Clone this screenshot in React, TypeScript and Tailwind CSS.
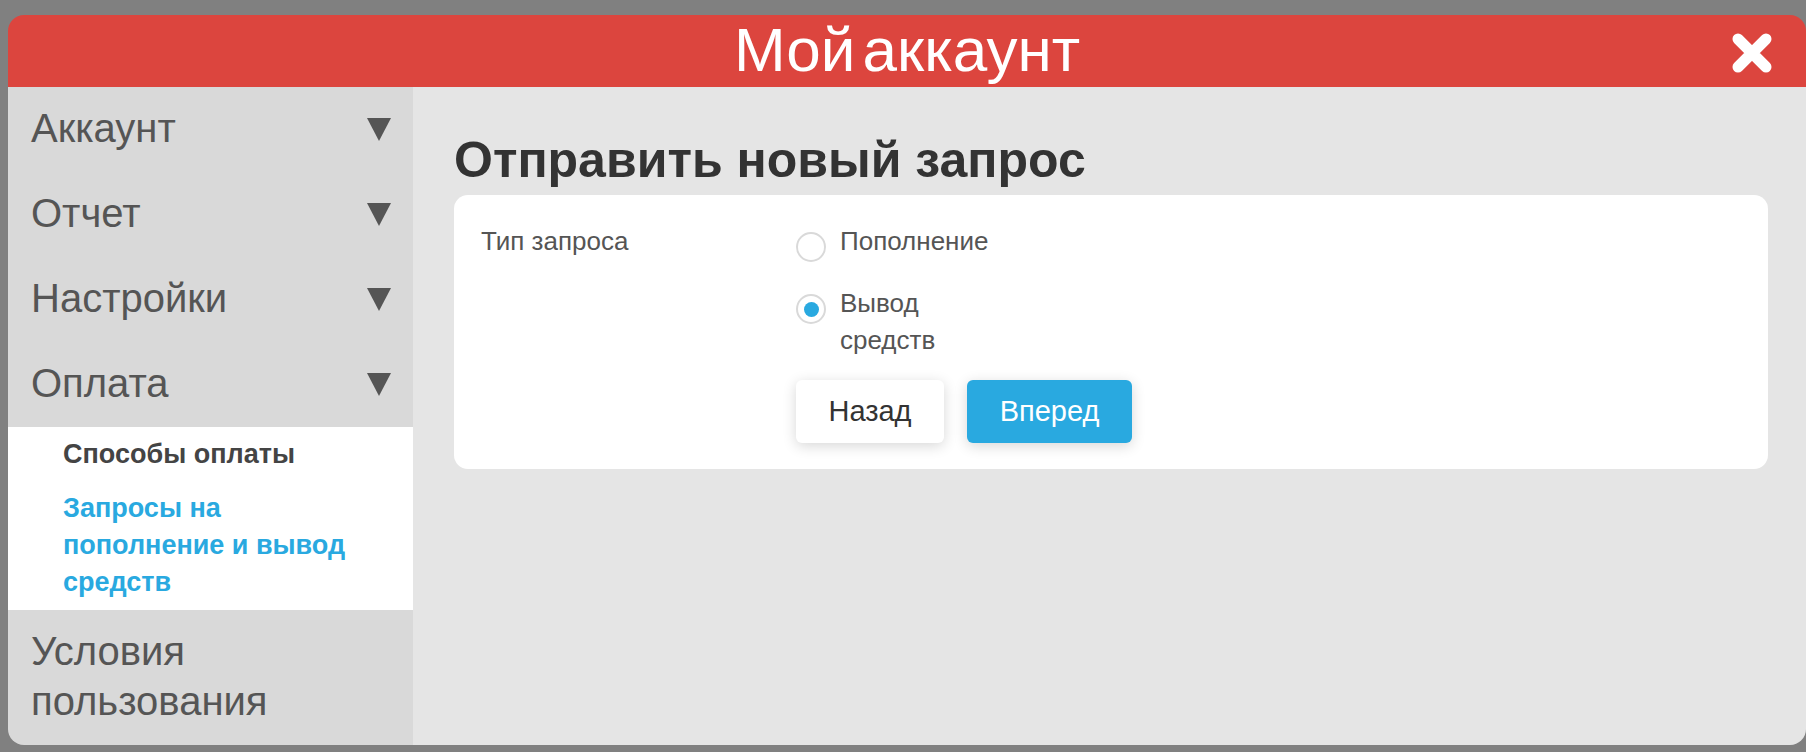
import React from 'react';

function Caret() {
  return (
    <svg width="24" height="23" viewBox="0 0 24 23" className="shrink-0">
      <polygon points="0,0 24,0 12,23" fill="#555555" />
    </svg>
  );
}

function Radio({ checked }: { checked?: boolean }) {
  return (
    <span className="mt-[9px] flex h-[30px] w-[30px] shrink-0 items-center justify-center rounded-full border-2 border-[#d9d9d9] bg-white">
      {checked && <span className="h-[15px] w-[15px] rounded-full bg-[#29a9e0]" />}
    </span>
  );
}

export default function App() {
  const menu = ['Аккаунт', 'Отчет', 'Настройки', 'Оплата'];

  return (
    <div className="h-[752px] w-full overflow-hidden bg-[#808080] pl-[8px] pt-[15px] font-['Liberation_Sans',Arial,sans-serif]">
      <div className="flex h-[730px] w-[1798px] flex-col overflow-hidden rounded-[16px]">
        {/* Header */}
        <div className="relative flex h-[72px] shrink-0 items-center justify-center bg-[#dc453e] pb-[3px]">
          <h1 className="text-[62px] leading-none text-white [word-spacing:-10px]">Мой аккаунт</h1>
          <button className="absolute right-[34px] top-[18px]">
            <svg width="40" height="40" viewBox="0 0 40 40">
              <path d="M6 6L34 34M34 6L6 34" stroke="white" strokeWidth="11" strokeLinecap="round" />
            </svg>
          </button>
        </div>

        <div className="flex flex-1">
          {/* Sidebar */}
          <div className="flex w-[405px] shrink-0 flex-col bg-[#d9d9d9]">
            {menu.map((item) => (
              <div
                key={item}
                className="flex h-[85px] items-center justify-between pl-[23px] pr-[22px] text-[40px] leading-[50px] text-[#555]"
              >
                <span className="-mt-[4px]">{item}</span>
                <Caret />
              </div>
            ))}
            <div className="flex flex-col gap-[17px] bg-white py-[9px] pl-[55px]">
              <span className="w-[295px] text-[27px] font-bold leading-[37px] text-[#444]">Способы оплаты</span>
              <span className="w-[295px] text-[27px] font-bold leading-[37px] text-[#29a9e0]">
                Запросы на пополнение и вывод средств
              </span>
            </div>
            <div className="flex-1 pl-[23px] pt-[16px] text-[40px] leading-[50px] text-[#555]">
              Условия
              <br />
              пользования
            </div>
          </div>

          {/* Main */}
          <div className="flex-1 bg-[#e5e5e5] pl-[41px] pr-[38px] pt-[48px]">
            <h2 className="mb-[10px] text-[50px] font-bold leading-[50px] text-[#333]">Отправить новый запрос</h2>
            <div className="flex rounded-[14px] bg-white pb-[26px] pl-[27px] pt-[28px]">
              <div className="w-[315px] shrink-0 text-[26px] leading-[37px] text-[#555]">Тип запроса</div>
              <div className="flex flex-col">
                <label className="flex gap-[14px]">
                  <Radio />
                  <span className="w-[160px] text-[26px] leading-[37px] text-[#555]">Пополнение</span>
                </label>
                <label className="mt-[23px] flex gap-[14px]">
                  <Radio checked />
                  <span className="w-[160px] text-[26px] leading-[37px] text-[#555]">Вывод средств</span>
                </label>
                <div className="mt-[21px] flex gap-[23px]">
                  <button className="h-[63px] w-[148px] rounded-[6px] bg-white text-[29px] text-[#333] shadow-[0_3px_14px_rgba(0,0,0,0.16)]">
                    Назад
                  </button>
                  <button className="h-[63px] w-[165px] rounded-[6px] bg-[#29a9e0] text-[29px] text-white shadow-[0_3px_14px_rgba(0,0,0,0.16)]">
                    Вперед
                  </button>
                </div>
              </div>
            </div>
          </div>
        </div>
      </div>
    </div>
  );
}
